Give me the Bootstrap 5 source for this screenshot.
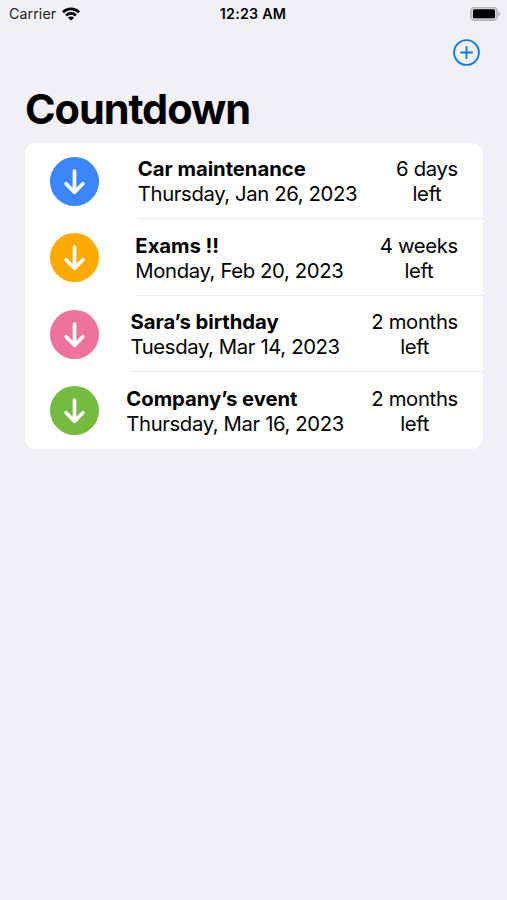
<!DOCTYPE html>
<html lang="en">
<head>
<meta charset="utf-8">
<meta name="viewport" content="width=device-width, initial-scale=1">
<title>Countdown</title>
<link href="https://cdn.jsdelivr.net/npm/bootstrap@5.3.0/dist/css/bootstrap.min.css" rel="stylesheet">
<style>
body{background:#f1f0f6;color:#000;font-family:Inter,"Liberation Sans",sans-serif;min-height:900px;overflow:hidden}
svg{display:block}
.status-bar{height:28px;padding:0 6px 0 7px;font-size:14.2px;line-height:28px}
.status-bar>div{flex:1 1 0}
.clock{font-weight:600;font-size:14.3px;letter-spacing:.2px;margin-right:2px}
.carrier{color:#222;letter-spacing:.1px;margin-left:2px}
.wifi{margin-left:6px;margin-bottom:1px}
.tool-bar{height:48px;padding-right:27px}
.add-btn{color:#0a7cf5}
.page-title{font-size:41.5px;line-height:50px;font-weight:700;letter-spacing:-1.1px;margin:8px 25px 8.85px}
.events{margin:0 24.5px 0 25px;border-radius:12px;background:#fff;overflow:hidden}
.event{height:76.5px;padding:0 24.5px 0 25px;border:0;background:#fff;color:#000;font-size:20.3px;line-height:25px}
.disc{width:49px;height:49px}
.blue{background:#3a87fd}.amber{background:#feab01}.pink{background:#ee719e}.green{background:#75bb40}
.details{height:100%;position:relative;white-space:nowrap}
.event:not(:last-child) .details::after{content:"";position:absolute;left:0;bottom:0;width:400px;height:1px;background:#ebebed}
.name{font-weight:700;letter-spacing:-.05px}
.date{letter-spacing:-.37px}
.left-time{letter-spacing:-.32px}
</style>
<script src="https://cdn.jsdelivr.net/npm/bootstrap@5.3.0/dist/js/bootstrap.bundle.min.js"></script>
</head>
<body>
<svg class="d-none"><symbol id="down" viewBox="0 0 49 49"><path d="M24.5 14V35.3M16.1 26.8l8.4 8.5 8.4-8.5" fill="none" stroke="#fff" stroke-width="3.7" stroke-linecap="round" stroke-linejoin="round"/></symbol></svg>
<header>
<div class="status-bar d-flex align-items-center">
<div class="d-flex align-items-center"><span class="carrier">Carrier</span>
<svg class="wifi" width="18" height="14" viewBox="0 0 18 14"><g fill="none" stroke="#000" stroke-width="2.7"><path d="M.9 5.2a11.5 11.5 0 0 1 16.2 0"/><path d="M4 8.5a7.1 7.1 0 0 1 10 0"/></g><path d="M9 13.6 6 10.7a4.2 4.2 0 0 1 6 0z"/></svg></div>
<span class="clock">12:23 AM</span>
<div class="d-flex justify-content-end"><svg width="31" height="15" viewBox="0 0 31 15"><rect x=".8" y=".3" width="26.4" height="13" rx="4" fill="#d0cfd2" stroke="#b5b4b7" stroke-width="1.5"/><rect x="3" y="2.3" width="22" height="9" rx="1.6" fill="#000"/><path d="M28.3 4.5q2.2.6 2.2 2.3t-2.2 2.3z" fill="#b5b4b7"/></svg></div>
</div>
<div class="tool-bar d-flex justify-content-end align-items-center">
<button class="btn p-0 border-0 add-btn" type="button" aria-label="Add"><svg width="27" height="27" viewBox="0 0 27 27" fill="none" stroke="currentColor" stroke-width="1.9" stroke-linecap="round"><circle cx="13.5" cy="13.5" r="12.4"/><path d="M13.5 8v11M8 13.5h11"/></svg></button>
</div>
<h1 class="page-title">Countdown</h1>
</header>
<main class="events list-group">
<div class="event list-group-item d-flex justify-content-between align-items-center">
<svg class="disc rounded-circle blue"><use href="#down"/></svg>
<div class="details d-flex flex-column justify-content-center"><span class="name">Car maintenance</span><span class="date">Thursday, Jan 26, 2023</span></div>
<div class="left-time text-center">6 days<br>left</div></div>
<div class="event list-group-item d-flex justify-content-between align-items-center">
<svg class="disc rounded-circle amber"><use href="#down"/></svg>
<div class="details d-flex flex-column justify-content-center"><span class="name">Exams !!</span><span class="date">Monday, Feb 20, 2023</span></div>
<div class="left-time text-center">4 weeks<br>left</div></div>
<div class="event list-group-item d-flex justify-content-between align-items-center">
<svg class="disc rounded-circle pink"><use href="#down"/></svg>
<div class="details d-flex flex-column justify-content-center"><span class="name">Sara’s birthday</span><span class="date">Tuesday, Mar 14, 2023</span></div>
<div class="left-time text-center">2 months<br>left</div></div>
<div class="event list-group-item d-flex justify-content-between align-items-center">
<svg class="disc rounded-circle green"><use href="#down"/></svg>
<div class="details d-flex flex-column justify-content-center"><span class="name">Company’s event</span><span class="date">Thursday, Mar 16, 2023</span></div>
<div class="left-time text-center">2 months<br>left</div></div>
</main>
</body>
</html>
